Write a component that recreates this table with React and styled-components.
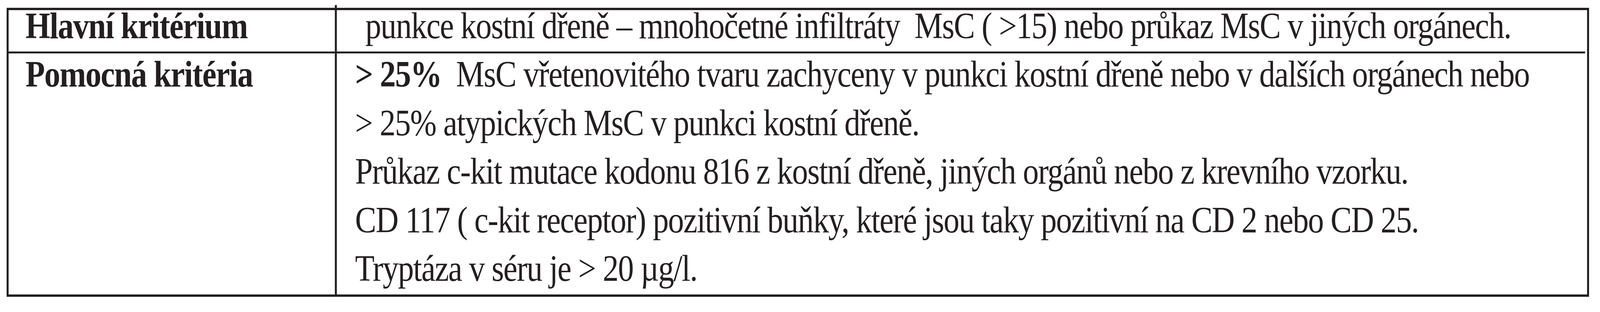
import React, { useEffect, useState } from 'react';
import styled, { createGlobalStyle } from 'styled-components';

const REF_WIDTH = 4826;

const GlobalStyle = createGlobalStyle`
  html, body {
    margin: 0;
    padding: 0;
    background: #fff;
    overflow: hidden;
  }
  body {
    font-family: "Liberation Serif", "Times New Roman", serif;
    color: #231f20;
  }
`;

// the sheet is laid out at the reference width and squeezed to the window width
const Sheet = styled.div`
  width: ${REF_WIDTH}px;
  padding: 20px 0 0 20px;
  box-sizing: border-box;
  transform-origin: 0 0;
`;

const Table = styled.div`
  display: grid;
  grid-template-columns: 984px 3771px;
  grid-template-rows: 106px 623px;
  width: 4761px;
  border: 6px solid #231f20;
  font-size: 96px;
  letter-spacing: -2px;
`;

const Cell = styled.div`
  position: relative;
  box-sizing: border-box;
  white-space: pre;
  border-left: ${p => (p.$right ? '6px solid #231f20' : 'none')};
  border-top: ${p => (p.$lower ? '5px solid #231f20' : 'none')};
  padding: ${p => (p.$lower ? '0 0 20px' : '0 0 26px')} ${p => p.$pad}px;
  line-height: ${p => (p.$lower ? '105px' : '80px')};
  font-weight: ${p => (p.$label ? 'bold' : 'normal')};

  ${p => p.$tick && `
    &::before {
      content: '';
      position: absolute;
      left: -6px;
      top: -13px;
      width: 6px;
      height: 7px;
      background: #231f20;
    }
  `}
`;

const Lines = styled.div`
  display: flex;
  flex-direction: column;
  gap: 19.5px;
`;

const Line = styled.div`
  height: 105px;
`;

const Strong = styled.b`
  font-weight: bold;
`;

const criteria = [
  <><Strong>&gt; 25%</Strong>{'  MsC vřetenovitého tvaru zachyceny v punkci kostní dřeně nebo v dalších orgánech nebo'}</>,
  '> 25% atypických MsC v punkci kostní dřeně.',
  'Průkaz c-kit mutace kodonu 816 z kostní dřeně, jiných orgánů nebo z krevního vzorku.',
  'CD 117 ( c-kit receptor) pozitivní buňky, které jsou taky pozitivní na CD 2 nebo CD 25.',
  'Tryptáza v séru je > 20 µg/l.',
];

const getScale = () => Math.min(1, window.innerWidth / REF_WIDTH);

export default function App() {
  const [scale, setScale] = useState(getScale);

  useEffect(() => {
    const onResize = () => setScale(getScale());
    window.addEventListener('resize', onResize);
    return () => window.removeEventListener('resize', onResize);
  }, []);

  return (
    <>
      <GlobalStyle />
      <Sheet style={{ transform: `scaleX(${scale})` }}>
        <Table>
          <Cell $label $pad={51}>Hlavní kritérium</Cell>
          <Cell $right $tick $pad={42}>
            {'  punkce kostní dřeně – mnohočetné infiltráty  MsC ( >15) nebo průkaz MsC v jiných orgánech.'}
          </Cell>
          <Cell $lower $label $pad={51}>
            <Lines>
              <Line>Pomocná kritéria</Line>
            </Lines>
          </Cell>
          <Cell $lower $right $pad={55}>
            <Lines>
              {criteria.map((c, i) => (
                <Line key={i}>{c}</Line>
              ))}
            </Lines>
          </Cell>
        </Table>
      </Sheet>
    </>
  );
}
